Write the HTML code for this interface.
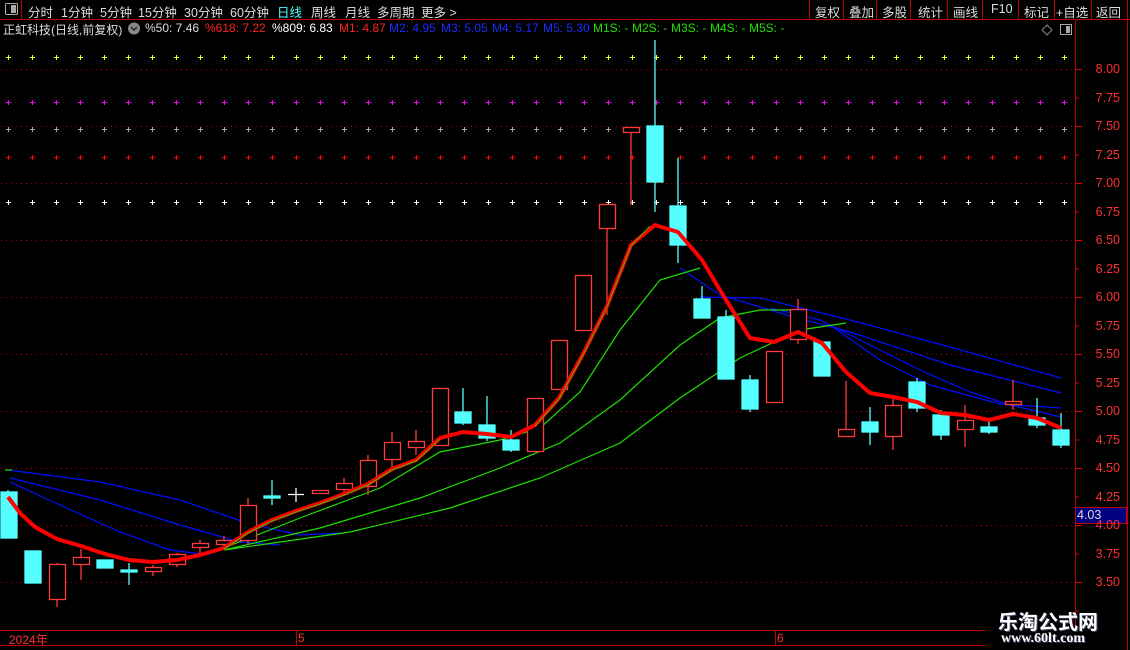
<!DOCTYPE html>
<html><head><meta charset="utf-8">
<style>
*{margin:0;padding:0;box-sizing:border-box}
body{width:1130px;height:650px;background:#000;overflow:hidden;position:relative;font-family:"Liberation Sans","Noto Sans CJK SC",sans-serif;font-size:13px;color:#ccc}
.t{position:absolute;white-space:nowrap}
.h{position:absolute;top:2px;font-size:12.5px;color:#ddd;white-space:nowrap}
.r{position:absolute;top:21px;font-size:12px;white-space:nowrap}
</style></head><body>
<svg width="1130" height="650" style="position:absolute;left:0;top:0" xmlns="http://www.w3.org/2000/svg">
<line x1="0" y1="19.5" x2="1130" y2="19.5" stroke="#c00000"/>
<line x1="21.5" y1="0" x2="21.5" y2="19" stroke="#c00000"/>
<rect x="5.5" y="3.5" width="12" height="11" fill="none" stroke="#aaa" rx="1"/>
<rect x="11" y="5" width="5" height="8" fill="#aaa"/>
<g stroke="#c00000">
<line x1="809.5" y1="0" x2="809.5" y2="19"/><line x1="843.5" y1="0" x2="843.5" y2="19"/><line x1="876.5" y1="0" x2="876.5" y2="19"/><line x1="910.5" y1="0" x2="910.5" y2="19"/><line x1="947.5" y1="0" x2="947.5" y2="19"/><line x1="982.5" y1="0" x2="982.5" y2="19"/><line x1="1018.5" y1="0" x2="1018.5" y2="19"/><line x1="1054.5" y1="0" x2="1054.5" y2="19"/><line x1="1091.5" y1="0" x2="1091.5" y2="19"/><line x1="1127.5" y1="0" x2="1127.5" y2="19"/>
</g>
<circle cx="134" cy="28.5" r="6" fill="#888"/><path d="M131 27l3 3 3-3" stroke="#222" stroke-width="1.5" fill="none"/>
<path d="M1047 25l5 5-5 5-5-5z" fill="none" stroke="#888"/>
<rect x="1060.5" y="24.5" width="11" height="10" fill="none" stroke="#aaa"/><rect x="1066" y="26" width="4" height="7" fill="#aaa"/>
<line x1="1075.5" y1="20" x2="1075.5" y2="630" stroke="#c00000"/>
<line x1="1127.5" y1="20" x2="1127.5" y2="650" stroke="#c00000"/>
<g stroke="#b00000" stroke-dasharray="1 4">
<line x1="1" y1="69.5" x2="1075" y2="69.5"/><line x1="1" y1="126.5" x2="1075" y2="126.5"/><line x1="1" y1="183.5" x2="1075" y2="183.5"/><line x1="1" y1="240.5" x2="1075" y2="240.5"/><line x1="1" y1="297.5" x2="1075" y2="297.5"/><line x1="1" y1="354.5" x2="1075" y2="354.5"/><line x1="1" y1="411.5" x2="1075" y2="411.5"/><line x1="1" y1="468.5" x2="1075" y2="468.5"/><line x1="1" y1="525.5" x2="1075" y2="525.5"/><line x1="1" y1="582.5" x2="1075" y2="582.5"/>
</g>
<g stroke="#e00000">
<path d="M1075 69.5h7M1075 126.5h7M1075 183.5h7M1075 240.5h7M1075 297.5h7M1075 354.5h7M1075 411.5h7M1075 468.5h7M1075 525.5h7M1075 582.5h7M1075 98h4M1075 155h4M1075 212h4M1075 269h4M1075 326h4M1075 383h4M1075 440h4M1075 497h4M1075 554h4M1075 611h4"/>
</g>
<rect x="1075.5" y="507.5" width="51" height="16" fill="#000080" stroke="#c00000"/>
<defs>
<pattern id="pY" width="24" height="5" patternUnits="userSpaceOnUse" x="6" y="55"><path d="M0 2.5h5M2.5 0v5" stroke="#ff0"/></pattern>
<pattern id="pM" width="24" height="5" patternUnits="userSpaceOnUse" x="6" y="100"><path d="M0 2.5h5M2.5 0v5" stroke="#f0f"/></pattern>
<pattern id="pG" width="24" height="5" patternUnits="userSpaceOnUse" x="6" y="127"><path d="M0 2.5h5M2.5 0v5" stroke="#aaa"/></pattern>
<pattern id="pR" width="24" height="5" patternUnits="userSpaceOnUse" x="6" y="155"><path d="M0 2.5h5M2.5 0v5" stroke="#f00"/></pattern>
<pattern id="pW" width="24" height="5" patternUnits="userSpaceOnUse" x="6" y="200"><path d="M0 2.5h5M2.5 0v5" stroke="#fff"/></pattern>
</defs>
<rect x="6" y="55" width="1065" height="5" fill="url(#pY)"/>
<rect x="6" y="100" width="1065" height="5" fill="url(#pM)"/>
<rect x="6" y="127" width="1065" height="5" fill="url(#pG)"/>
<rect x="6" y="155" width="1065" height="5" fill="url(#pR)"/>
<rect x="6" y="200" width="1065" height="5" fill="url(#pW)"/>
<g fill="none" stroke="#0010ff" stroke-width="1.2">
<path d="M8 470 L100 482 L180 500 L250 524 L300 535 L340 533"/>
<path d="M10 478 L100 500 L180 525 L240 542 L280 545"/>
<path d="M10 482 L60 505 L120 532 L170 550 L210 555"/>
<path d="M700 297 L760 298 L850 320 L950 347 L1061 378"/>
<path d="M680 268 L720 295 L790 316 L850 332 L950 365 L1061 393"/>
<path d="M770 308 L820 320 L870 345 L920 370 L970 392 L1010 405 L1061 417"/>
<path d="M830 325 L880 360 L930 385 L1000 404 L1061 408"/>
</g>
<g fill="none" stroke="#1fe000" stroke-width="1.2">
<path d="M5 470 L12 470"/>
<path d="M224 548 L300 518 L380 488 L440 452 L500 440 L540 428 L580 392 L620 330 L660 280 L700 268"/>
<path d="M224 550 L320 528 L420 498 L500 468 L560 443 L620 400 L680 345 L720 318 L760 310 L800 310"/>
<path d="M224 550 L350 532 L450 508 L540 478 L620 443 L680 398 L740 358 L800 330 L846 323"/>
</g>
<g stroke-width="1.3">
<g stroke="#55ffff" fill="#55ffff">
<path d="M8 490V538M129 563V585M272 480V505M463 388V425M487 396V441M511 430V452M655 40V212M678 158V263M702 286V318M726 310V379M750 375V412M822 342V376M870 407V445M917 378V412M941 410V440M989 421V434M1037 398V428M1061 413V448"/>
<rect x="1" y="492" width="16" height="46"/><rect x="25" y="551" width="16" height="32"/><rect x="97" y="560" width="16" height="8"/><rect x="121" y="570" width="16" height="2"/><rect x="264" y="496" width="16" height="2"/><rect x="455" y="412" width="16" height="11"/><rect x="479" y="425" width="16" height="13"/><rect x="503" y="440" width="16" height="10"/><rect x="647" y="126" width="16" height="56"/><rect x="670" y="206" width="16" height="39"/><rect x="694" y="299" width="16" height="19"/><rect x="718" y="317" width="16" height="62"/><rect x="742" y="380" width="16" height="29"/><rect x="814" y="342" width="16" height="34"/><rect x="862" y="422" width="16" height="10"/><rect x="909" y="382" width="16" height="26"/><rect x="933" y="415" width="16" height="20"/><rect x="981" y="427" width="16" height="5"/><rect x="1029" y="418" width="16" height="7"/><rect x="1053" y="430" width="16" height="15"/>
</g>
<path d="M288 494.5H304M296 488V502" stroke="#fff"/>
<g stroke="#ff3b3b" fill="#000">
<path d="M57 563V607M81 549V580M153 565V576M177 553V567M200 540V553M224 536V548M248 498V545M344 478V494M368 455V495M392 432V467M416 430V455M607 204V315M631 127V205M798 299V344M846 381V437M893 398V450M965 405V447M1013 380V410"/>
<rect x="49.5" y="564.5" width="16" height="35"/><rect x="73.5" y="557.5" width="16" height="7"/><rect x="145.5" y="567.5" width="16" height="4"/><rect x="169.5" y="554.5" width="16" height="10"/><rect x="192.5" y="543.5" width="16" height="4"/><rect x="216.5" y="540.5" width="16" height="4"/><rect x="240.5" y="505.5" width="16" height="35"/><rect x="312.5" y="490.5" width="16" height="3"/><rect x="336.5" y="483.5" width="16" height="6"/><rect x="360.5" y="460.5" width="16" height="26"/><rect x="384.5" y="442.5" width="16" height="17"/><rect x="408.5" y="441.5" width="16" height="6"/><rect x="432.5" y="388.5" width="16" height="57"/><rect x="527.5" y="398.5" width="16" height="53"/><rect x="551.5" y="340.5" width="16" height="49"/><rect x="575.5" y="275.5" width="16" height="55"/><rect x="599.5" y="204.5" width="16" height="24"/><rect x="623.5" y="127.5" width="16" height="5"/><rect x="766.5" y="351.5" width="16" height="51"/><rect x="790.5" y="309.5" width="16" height="30"/><rect x="838.5" y="429.5" width="16" height="7"/><rect x="885.5" y="405.5" width="16" height="31"/><rect x="957.5" y="420.5" width="16" height="9"/><rect x="1005.5" y="401.5" width="16" height="3"/>
</g>
</g>
<path d="M8 497 L20 513 L35 527 L57 539 L81 546 L105 554 L129 560 L153 562 L177 560 L200 555 L224 548 L248 532 L272 520 L296 511 L320 503 L344 494 L368 484 L392 469 L416 460 L440 438 L463 432 L487 434 L511 437 L535 425 L559 398 L583 354 L607 306 L631 245 L655 225 L678 232 L702 260 L726 300 L750 338 L774 342 L798 332 L822 343 L846 372 L870 393 L893 397 L917 402 L941 413 L965 415 L989 420 L1013 414 L1037 418 L1061 428" fill="none" stroke="#ff0000" stroke-width="4" stroke-linejoin="round"/>
<path d="M224 549 L248 533 L272 521 L296 512 L320 504 L344 495 L368 485 L392 470 L416 461 L440 439 M535 426 L559 399 L583 355 L607 307 L631 246 L650 226" fill="none" stroke="#1fe000" stroke-width="0.8"/>
<line x1="0" y1="630.5" x2="985" y2="630.5" stroke="#c00000"/>
<line x1="0" y1="645.5" x2="985" y2="645.5" stroke="#c00000"/>
<line x1="296.5" y1="631" x2="296.5" y2="645" stroke="#c00000"/>
<line x1="775.5" y1="631" x2="775.5" y2="645" stroke="#c00000"/>
</svg>
<div class="h" style="left:28px">分时</div>
<div class="h" style="left:61px">1分钟</div>
<div class="h" style="left:100px">5分钟</div>
<div class="h" style="left:138px">15分钟</div>
<div class="h" style="left:184px">30分钟</div>
<div class="h" style="left:230px">60分钟</div>
<div class="h" style="left:277px;color:#55ffff">日线</div>
<div class="h" style="left:311px">周线</div>
<div class="h" style="left:345px">月线</div>
<div class="h" style="left:377px">多周期</div>
<div class="h" style="left:421px">更多 &gt;</div>
<div class="h" style="left:815px">复权</div>
<div class="h" style="left:849px">叠加</div>
<div class="h" style="left:882px">多股</div>
<div class="h" style="left:918px">统计</div>
<div class="h" style="left:953px">画线</div>
<div class="h" style="left:991px">F10</div>
<div class="h" style="left:1024px">标记</div>
<div class="h" style="left:1056px">+自选</div>
<div class="h" style="left:1096px">返回</div>
<div class="r" style="left:3px;color:#ddd">正虹科技(日线,前复权)</div>
<div class="r" style="left:145px;color:#ddd">%50: 7.46</div>
<div class="r" style="left:205px;color:#ff2020">%618: 7.22</div>
<div class="r" style="left:272px;color:#fff">%809: 6.83</div>
<div class="r" style="left:339px;color:#ff2020">M1: 4.87</div>
<div class="r" style="left:389px;color:#1a2cff">M2: 4.95</div>
<div class="r" style="left:441px;color:#1a2cff">M3: 5.05</div>
<div class="r" style="left:492px;color:#1a2cff">M4: 5.17</div>
<div class="r" style="left:543px;color:#1a2cff">M5: 5.30</div>
<div class="r" style="left:593px;color:#1fe000">M1S: -</div>
<div class="r" style="left:632px;color:#1fe000">M2S: -</div>
<div class="r" style="left:671px;color:#1fe000">M3S: -</div>
<div class="r" style="left:710px;color:#1fe000">M4S: -</div>
<div class="r" style="left:749px;color:#1fe000">M5S: -</div>
<div style="position:absolute;left:1080px;top:0;width:40px;font-size:12.5px;color:#ff3030;text-align:right">
<div class="t" style="right:0;top:62px">8.00</div><div class="t" style="right:0;top:91px">7.75</div><div class="t" style="right:0;top:119px">7.50</div><div class="t" style="right:0;top:148px">7.25</div><div class="t" style="right:0;top:176px">7.00</div><div class="t" style="right:0;top:205px">6.75</div><div class="t" style="right:0;top:233px">6.50</div><div class="t" style="right:0;top:262px">6.25</div><div class="t" style="right:0;top:290px">6.00</div><div class="t" style="right:0;top:319px">5.75</div><div class="t" style="right:0;top:347px">5.50</div><div class="t" style="right:0;top:376px">5.25</div><div class="t" style="right:0;top:404px">5.00</div><div class="t" style="right:0;top:433px">4.75</div><div class="t" style="right:0;top:461px">4.50</div><div class="t" style="right:0;top:490px">4.25</div><div class="t" style="right:0;top:518px">4.00</div><div class="t" style="right:0;top:547px">3.75</div><div class="t" style="right:0;top:575px">3.50</div>
</div>
<div class="t" style="left:1077px;top:508px;font-size:12.5px;color:#ddd">4.03</div>
<div class="t" style="left:9px;top:631px;font-size:12px;color:#ff3030">2024年</div>
<div class="t" style="left:298px;top:631px;font-size:12px;color:#ff3030">5</div>
<div class="t" style="left:777px;top:631px;font-size:12px;color:#ff3030">6</div>
<div class="t" style="left:998px;top:606px;font-size:20px;font-weight:bold;color:#fff;text-shadow:1px 1px 0 #446">乐淘公式网</div>
<div class="t" style="left:1001px;top:631px;font-size:14px;font-weight:bold;color:#fff;font-family:'Liberation Serif',serif;text-shadow:1px 1px 0 #446">www.60lt.com</div>
</body></html>
